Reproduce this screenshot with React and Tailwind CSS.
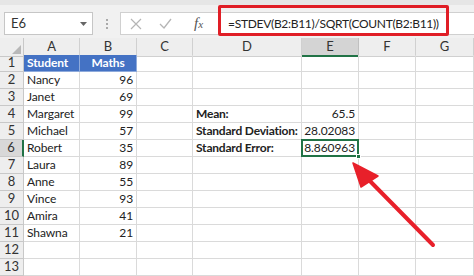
import React from "react";

const cols = ["A", "B", "C", "D", "E", "F", "G"];
const data = [
  ["Student", "Maths"],
  ["Nancy", "96"],
  ["Janet", "69"],
  ["Margaret", "99"],
  ["Michael", "57"],
  ["Robert", "35"],
  ["Laura", "89"],
  ["Anne", "55"],
  ["Vince", "93"],
  ["Amira", "41"],
  ["Shawna", "21"],
  ["", ""],
  ["", ""],
];
const stats = { 4: ["Mean:", "65.5"], 5: ["Standard Deviation:", "28.02083"], 6: ["Standard Error:", "8.860963"] };

export default function App() {
  return (
    <div className="relative w-[474px] h-[276px] overflow-hidden bg-white font-['Lato',sans-serif] text-[#222]">
      {/* Formula bar */}
      <div className="h-[38px] bg-[#f1f1f1] border-t-[5px] border-[#e6e6e6] flex items-start pt-[7px] pl-[4px]">
        <div className="w-[89px] h-[23px] bg-white border border-[#c6c6c6] flex items-center justify-between pl-[6px] pr-[5px]">
          <span className="text-[13px] leading-none text-[#333]">E6</span>
          <svg width="7" height="4" viewBox="0 0 7 4"><path d="M0 0h7L3.5 4z" fill="#666" /></svg>
        </div>
        <div className="w-[27px] h-[23px] flex flex-col items-center justify-center gap-[2px]">
          <span className="w-[2px] h-[2px] bg-[#aaa]" />
          <span className="w-[2px] h-[2px] bg-[#aaa]" />
          <span className="w-[2px] h-[2px] bg-[#aaa]" />
        </div>
        <div className="flex-1 h-[23px] bg-white border-y border-l border-[#d0d0d0] flex items-center">
          <svg className="ml-[9px]" width="12" height="12" viewBox="0 0 12 12"><path d="M1 1l10 10M11 1L1 11" stroke="#b5b5b5" strokeWidth="1.2" /></svg>
          <svg className="ml-[17px]" width="13" height="11" viewBox="0 0 13 11"><path d="M1 6l4 4 7-9" stroke="#b5b5b5" strokeWidth="1.3" fill="none" /></svg>
          <span className="ml-[22px] font-['Liberation_Serif',serif] italic text-[15px] leading-none text-[#555]">f<span className="text-[11px]">x</span></span>
          <span className="ml-[25px] font-['Lato',sans-serif] text-[12px] leading-none text-[#222] tracking-[-0.3px]">=STDEV(B2:B11)/SQRT(COUNT(B2:B11))</span>
        </div>
      </div>

      {/* Grid */}
      <div className="grid grid-cols-[24px_56px_57px_56px_109px_57px_57px_1fr] auto-rows-[17px] text-[12px] tracking-[-0.1px]">
        <div className="h-[19px] bg-[#eeeeee] border-r border-b border-[#c8c8c8] relative">
          <svg className="absolute right-[2px] bottom-[2px]" width="9" height="9" viewBox="0 0 9 9"><path d="M9 0v9H0z" fill="#b8b8b8" /></svg>
        </div>
        {cols.map((c) => (
          <div
            key={c}
            className={
              c === "E"
                ? "h-[19px] bg-[#d4d4d4] border-r border-b-2 border-r-[#c0c0c0] border-b-[#217346] flex items-center justify-center text-[13px] text-[#333]"
                : "h-[19px] bg-[#eeeeee] border-r border-b border-[#d0d0d0] flex items-center justify-center text-[13px] text-[#333]"
            }
          >
            {c}
          </div>
        ))}
        {data.map((row, i) => {
          const r = i + 1;
          const st = stats[r];
          const hdr = r === 1;
          return (
            <React.Fragment key={r}>
              <div
                className={
                  r === 6
                    ? "bg-[#d8d8d8] border-r-2 border-b border-r-[#217346] border-b-[#c8c8c8] flex items-center justify-center text-[13px] text-[#333]"
                    : "bg-[#eeeeee] border-r border-b border-[#c8c8c8] flex items-center justify-center text-[13px] text-[#333]"
                }
              >
                {r}
              </div>
              <div className={hdr ? "bg-[#4472c4] border-r border-b border-[#8eaadb] flex items-center pl-[3px] text-white font-bold" : "border-r border-b border-[#dadada] flex items-center pl-[3px]"}>
                {row[0]}
              </div>
              <div className={hdr ? "bg-[#4472c4] border-r border-b border-[#8eaadb] flex items-center justify-center text-white font-bold" : "border-r border-b border-[#dadada] flex items-center justify-end pr-[3px]"}>
                {row[1]}
              </div>
              <div className="border-r border-b border-[#dadada]" />
              <div className="border-r border-b border-[#dadada] flex items-center pl-[3px] font-bold whitespace-nowrap tracking-[-0.2px]">
                {st ? st[0] : ""}
              </div>
              <div
                className={
                  r === 6
                    ? "relative border-2 border-[#217346] -mt-[1px] -ml-[1px] flex items-center justify-end pr-[2px]"
                    : "border-r border-b border-[#dadada] flex items-center justify-end pr-[3px]"
                }
              >
                {st ? st[1] : ""}
                {r === 6 && <span className="absolute -right-[4px] -bottom-[4px] w-[5px] h-[5px] bg-[#217346] border border-white" />}
              </div>
              <div className="border-r border-b border-[#dadada]" />
              <div className="border-r border-b border-[#dadada]" />
            </React.Fragment>
          );
        })}
      </div>

      {/* Annotations */}
      <div className="absolute left-[218px] top-[5px] w-[231px] h-[31px] border-[3px] border-[#e01e26] rounded-[2px]" />
      <svg className="absolute left-0 top-0 pointer-events-none" width="474" height="276" viewBox="0 0 474 276">
        <path d="M433 245L366 177" stroke="#e8202a" strokeWidth="4" strokeLinecap="round" />
        <path d="M353 163L378 176L361 187z" fill="#e8202a" stroke="#e8202a" strokeWidth="1.5" strokeLinejoin="round" />
      </svg>
    </div>
  );
}
